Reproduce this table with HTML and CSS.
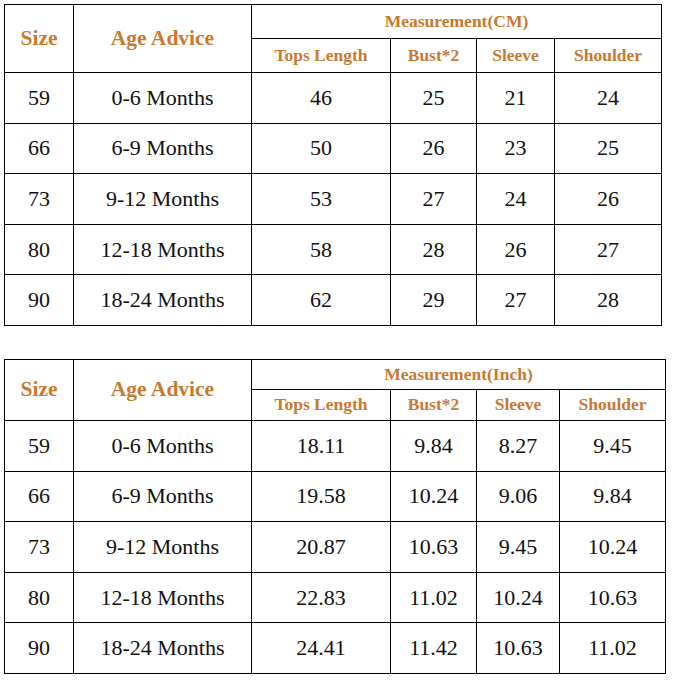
FILE: index.html
```html
<!DOCTYPE html>
<html>
<head>
<meta charset="utf-8">
<link rel="stylesheet" href="styles.css">
</head>
<body>
<div class="page">
  <table class="size-table t-cm">
    <colgroup>
      <col class="c-size"><col class="c-age"><col class="c-len"><col class="c-bust"><col class="c-sleeve"><col class="c-shoulder">
    </colgroup>
    <thead>
      <tr class="h1">
        <th rowspan="2" class="big">Size</th>
        <th rowspan="2" class="big">Age Advice</th>
        <th colspan="4">Measurement(CM)</th>
      </tr>
      <tr class="h2">
        <th>Tops Length</th><th>Bust*2</th><th>Sleeve</th><th>Shoulder</th>
      </tr>
    </thead>
    <tbody>
      <tr class="r"><td>59</td><td>0-6 Months</td><td>46</td><td>25</td><td>21</td><td>24</td></tr>
      <tr class="r"><td>66</td><td>6-9 Months</td><td>50</td><td>26</td><td>23</td><td>25</td></tr>
      <tr class="r"><td>73</td><td>9-12 Months</td><td>53</td><td>27</td><td>24</td><td>26</td></tr>
      <tr class="r"><td>80</td><td>12-18 Months</td><td>58</td><td>28</td><td>26</td><td>27</td></tr>
      <tr class="r"><td>90</td><td>18-24 Months</td><td>62</td><td>29</td><td>27</td><td>28</td></tr>
    </tbody>
  </table>

  <table class="size-table t-in">
    <colgroup>
      <col class="c-size"><col class="c-age"><col class="c-len"><col class="c-bust"><col class="c-sleeve2"><col class="c-shoulder2">
    </colgroup>
    <thead>
      <tr class="h1">
        <th rowspan="2" class="big">Size</th>
        <th rowspan="2" class="big">Age Advice</th>
        <th colspan="4">Measurement(Inch)</th>
      </tr>
      <tr class="h2">
        <th>Tops Length</th><th>Bust*2</th><th>Sleeve</th><th>Shoulder</th>
      </tr>
    </thead>
    <tbody>
      <tr class="r"><td>59</td><td>0-6 Months</td><td>18.11</td><td>9.84</td><td>8.27</td><td>9.45</td></tr>
      <tr class="r"><td>66</td><td>6-9 Months</td><td>19.58</td><td>10.24</td><td>9.06</td><td>9.84</td></tr>
      <tr class="r"><td>73</td><td>9-12 Months</td><td>20.87</td><td>10.63</td><td>9.45</td><td>10.24</td></tr>
      <tr class="r"><td>80</td><td>12-18 Months</td><td>22.83</td><td>11.02</td><td>10.24</td><td>10.63</td></tr>
      <tr class="r"><td>90</td><td>18-24 Months</td><td>24.41</td><td>11.42</td><td>10.63</td><td>11.02</td></tr>
    </tbody>
  </table>
</div>
</body>
</html>
```

FILE: styles.css
```css
html, body {
  margin: 0;
  padding: 0;
  background: #fff;
}
.page {
  padding: 4px 0 0 4px;
  display: flex;
  flex-direction: column;
  gap: 33px;
  align-items: flex-start;
}
.size-table {
  border-collapse: collapse;
  table-layout: fixed;
  font-family: "Liberation Serif", "Times New Roman", serif;
  color: #111;
}
.t-cm { width: 657px; }
.t-in { width: 661px; }
.c-size { width: 69px; }
.c-age { width: 178px; }
.c-len { width: 139px; }
.c-bust { width: 86px; }
.c-sleeve { width: 78px; }
.c-shoulder { width: 107px; }
.c-sleeve2 { width: 83px; }
.c-shoulder2 { width: 106px; }
.size-table th,
.size-table td {
  border: 1px solid #000;
  padding: 0;
  text-align: center;
  vertical-align: middle;
  box-sizing: border-box;
}
.size-table th {
  color: #c97a2f;
  font-weight: bold;
  font-size: 17.5px;
}
.size-table th.big {
  font-size: 21.5px;
}
.size-table td {
  font-size: 22px;
}
.t-cm .h1 { height: 34px; }
.t-cm .h2 { height: 34px; }
.t-cm .r { height: 50.6px; }
.t-in .h1 { height: 30px; }
.t-in .h2 { height: 31px; }
.t-in .r { height: 50.6px; }
```
